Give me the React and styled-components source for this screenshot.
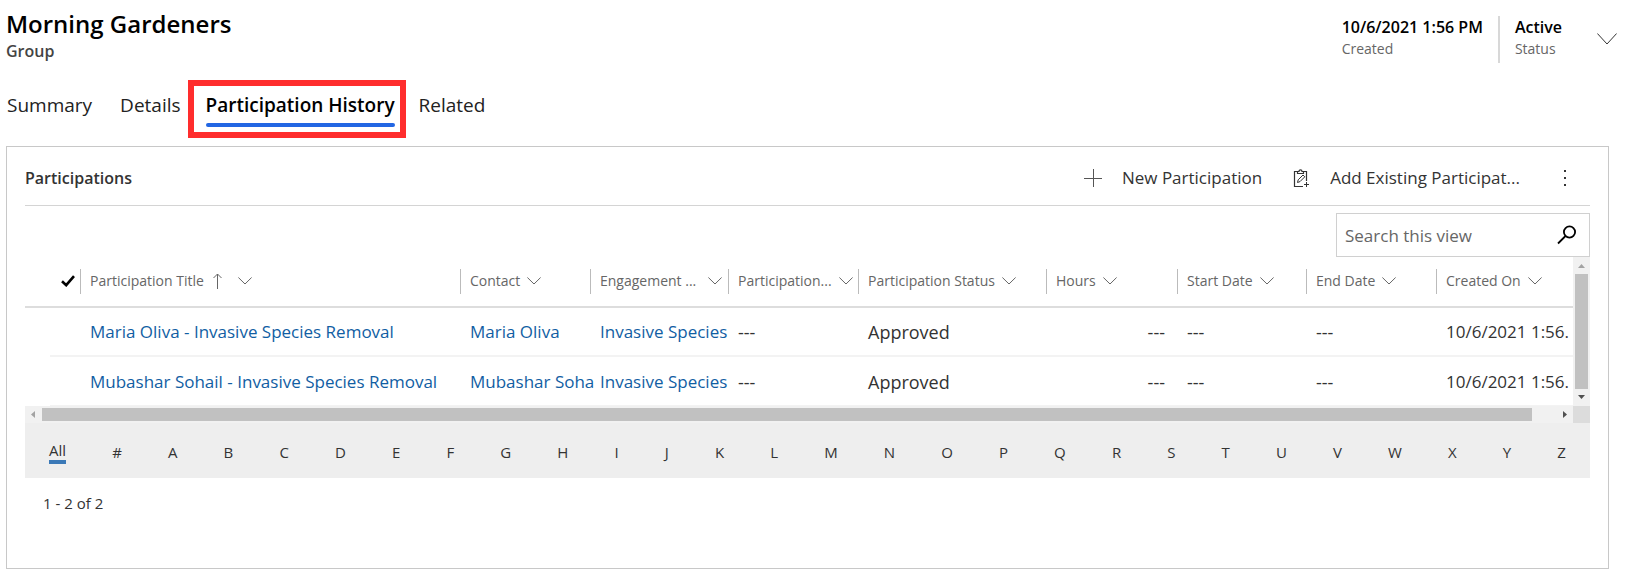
import React from "react";
import styled, { createGlobalStyle } from "styled-components";

const GlobalStyle = createGlobalStyle`
  *, *::before, *::after { box-sizing: border-box; }
  body {
    margin: 0;
    background: #fff;
    color: #333;
    font-family: "Open Sans", "Noto Sans", sans-serif;
    font-size: 16px;
  }
  button, input { font: inherit; color: inherit; }
  button { background: none; border: 0; padding: 0; cursor: pointer; }
  a { text-decoration: none; }
  svg { display: block; flex: none; }
`;

const Page = styled.main`
  padding: 8px 21px 12px 6px;
`;

const RecordHeader = styled.header`
  display: flex;
  justify-content: space-between;
  height: 72px;
`;

const Title = styled.h1`
  margin: 0;
  font-size: 24px;
  line-height: 32px;
  font-weight: 600;
  color: #000;
`;

const EntityName = styled.p`
  margin: 0;
  font-size: 16px;
  line-height: 22px;
  font-weight: 600;
  color: #444;
`;

const HeaderFields = styled.div`
  display: flex;
  align-items: flex-start;
  padding-top: 8px;
`;

const Field = styled.dl`
  margin: 0;
  height: 47px;
  padding: 0 15px;
  display: flex;
  flex-direction: column-reverse;
  justify-content: flex-end;
  & + & { border-left: 2px solid #d8d8d8; }
`;

const FieldValue = styled.dd`
  margin: 0;
  font-size: 16px;
  line-height: 22px;
  font-weight: 600;
  color: #000;
`;

const FieldLabel = styled.dt`
  font-size: 14px;
  line-height: 22px;
  color: #666;
`;

const ExpandButton = styled.button`
  margin: 17px -8px 0 20px;
`;

const Tabs = styled.nav`
  display: flex;
  align-items: flex-start;
  height: 66px;
`;

const Tab = styled.button`
  padding: 0 1px;
  margin-right: 26px;
  margin-top: 11px;
  font-size: 19px;
  line-height: 28px;
  color: #222;
`;

const ActiveTabFrame = styled.div`
  height: 58px;
  margin: 0 12px 0 -20px;
  padding: 5px 5px 0 12px;
  border: 6px solid #ff2d2d;
`;

const ActiveTab = styled(Tab)`
  display: block;
  margin: 0;
  padding: 0;
  font-weight: 600;
  color: #000;
  &::after {
    content: "";
    display: block;
    height: 4px;
    margin-top: 4px;
    border-radius: 2px;
    background: #2266e3;
  }
`;

const Panel = styled.section`
  border: 1px solid #c8c8c8;
  padding: 0 18px;
  min-height: 423px;
`;

const Toolbar = styled.div`
  display: flex;
  align-items: center;
  height: 59px;
  padding-top: 4px;
  border-bottom: 1px solid #d4d4d4;
`;

const PanelTitle = styled.h2`
  margin: 0;
  flex: 1;
  font-size: 16px;
  line-height: 24px;
  font-weight: 600;
  color: #333;
`;

const Command = styled.button`
  display: flex;
  align-items: center;
  gap: 20px;
  margin-right: 31px;
  font-size: 17px;
  line-height: 24px;
`;

const MoreButton = styled.button`
  margin: 0 23px 0 12px;
`;

const SearchRow = styled.div`
  display: flex;
  justify-content: flex-end;
  padding-top: 7px;
`;

const SearchBox = styled.form`
  display: flex;
  align-items: center;
  width: 254px;
  height: 44px;
  padding: 0 12px 0 8px;
  border: 1px solid #d0d0d0;
`;

const SearchInput = styled.input`
  flex: 1;
  min-width: 0;
  padding: 0;
  border: 0;
  outline: 0;
  font-size: 17px;
  &::placeholder { color: #666; opacity: 1; }
`;

const GridArea = styled.div`
  display: grid;
  grid-template-columns: minmax(0, 1fr) 17px;
  grid-template-rows: auto 17px;
`;

const Table = styled.table`
  width: 100%;
  table-layout: fixed;
  border-collapse: collapse;
`;

const Col = styled.col`
  width: ${(p) => (p.$w ? `${p.$w}px` : "auto")};
`;

const HeadCell = styled.th`
  height: 50px;
  padding: 1px 0 2px;
  border-bottom: 2px solid #ddd;
  font-weight: 400;
  text-align: left;
`;

const HeadContent = styled.div`
  display: flex;
  align-items: center;
  gap: 7px;
  height: 25px;
  padding: 0 6px 0 9px;
  border-left: 1px solid #bbb;
  font-size: 14px;
  line-height: 24px;
  white-space: nowrap;
  color: #666;
`;

const HeadLabel = styled.span`
  flex: ${(p) => (p.$fill ? "1" : "none")};
`;

const SelectAll = styled.button`
  display: block;
  margin-left: 36px;
`;

const Cell = styled.td`
  height: 50px;
  padding: 0 ${(p) => (p.$right ? "12px" : "0")} 2px 10px;
  white-space: nowrap;
  font-size: ${(p) => (p.$large ? "18px" : "17px")};
  line-height: 24px;
  text-align: ${(p) => (p.$right ? "right" : "left")};
  a { color: #115ea3; }
`;

const Row = styled.tr`
  background: linear-gradient(#f3f3f3, #f3f3f3) right bottom / calc(100% - 25px) 2px no-repeat;
  &:last-child {
    background-size: calc(100% - 25px) 1px;
  }
  &:last-child ${Cell} {
    height: 49px;
    padding-bottom: 0;
  }
`;

const VerticalScroll = styled.div`
  display: flex;
  flex-direction: column;
  align-items: center;
  background: #f1f1f1;
`;

const HorizontalScroll = styled.div`
  display: flex;
  align-items: center;
  background: #f1f1f1;
`;

const ScrollArrow = styled.button`
  display: flex;
  align-items: center;
  justify-content: center;
  width: 17px;
  height: 17px;
  flex: none;
  color: ${(p) => (p.$dim ? "#a3a3a3" : "#505050")};
`;

const VerticalThumb = styled.div`
  flex: 1;
  width: 13px;
  background: #c1c1c1;
`;

const HorizontalThumb = styled.div`
  flex: 1;
  height: 13px;
  margin-right: 24px;
  background: #c1c1c1;
`;

const ScrollCorner = styled.div`
  background: #dcdcdc;
`;

const JumpBar = styled.nav`
  display: flex;
  justify-content: space-between;
  align-items: center;
  height: 55px;
  padding: 2px 24px 0;
  background: #eee;
`;

const JumpButton = styled.button`
  font-size: 15px;
  line-height: 20px;
  color: #333;
  ${(p) => p.$active && "border-bottom: 4px solid #3b79b7;"}
`;

const Paging = styled.p`
  margin: 0;
  padding: 15px 18px;
  font-size: 15px;
  line-height: 20px;
`;

function Chevron({ width = 14, height = 8 }) {
  return (
    <svg width={width} height={height} viewBox={`0 0 ${width} ${height}`} fill="none" stroke="currentColor" aria-hidden="true">
      <path d={`M.4 .5L${width / 2} ${height - 1}L${width - 0.4} .5`} />
    </svg>
  );
}

const SortUp = () => (
  <svg width="20" height="16" viewBox="0 0 20 16" fill="none" stroke="currentColor" aria-hidden="true">
    <path d="M6.500 16V1M2.500 5L6.500 1L10.500 5" />
  </svg>
);

const Plus = () => (
  <svg width="18" height="18" viewBox="0 0 18 18" fill="none" stroke="#555" aria-hidden="true">
    <path d="M9.500 0V18M0 9.500H18" />
  </svg>
);

const ClipboardAdd = () => (
  <svg width="17" height="19" viewBox="0 0 17 19" fill="none" stroke="#333" aria-hidden="true">
    <path d="M10 17.500H1.500V2.500H4.500M10.500 2.500H13.500V12M4.500 4.500V2.500H6C6 .2 9 .2 9 2.500H10.500V4.500Z" strokeWidth="1.200" />
    <path d="M4.500 13.500L5.200 10.800L10 6L11.800 7.800L7 12.600Z" />
    <path d="M13.500 13V18M11 15.500H16" />
  </svg>
);

const More = () => (
  <svg width="4" height="18" viewBox="0 0 4 18" fill="#333" aria-hidden="true">
    <rect x="1" y="1" width="2" height="2" />
    <rect x="1" y="8" width="2" height="2" />
    <rect x="1" y="15" width="2" height="2" />
  </svg>
);

const Magnifier = () => (
  <svg width="20" height="20" viewBox="0 0 20 20" fill="none" stroke="#000" strokeWidth="1.800" aria-hidden="true">
    <circle cx="12.500" cy="7" r="5.600" />
    <path d="M8.500 11L1 18.500" />
  </svg>
);

const Check = () => (
  <svg width="14" height="12" viewBox="0 0 14 12" fill="none" stroke="#000" strokeWidth="2.600" aria-hidden="true">
    <path d="M1 6.200L5.200 10.200L13 1.200" />
  </svg>
);

const arrowPaths = {
  up: "M0 6L3.500 2L7 6Z",
  down: "M0 1L3.500 5L7 1Z",
  left: "M5 0L1 3.500L5 7Z",
  right: "M2 0L6 3.500L2 7Z",
};

const Arrow = ({ dir }) => (
  <svg width="7" height="7" viewBox="0 0 7 7" fill="currentColor" aria-hidden="true">
    <path d={arrowPaths[dir]} />
  </svg>
);

const columns = [
  { label: "Participation Title", sorted: true },
  { label: "Contact", width: 130 },
  { label: "Engagement ...", width: 138, fill: true },
  { label: "Participation...", width: 130, fill: true },
  { label: "Participation Status", width: 188 },
  { label: "Hours", width: 131 },
  { label: "Start Date", width: 129 },
  { label: "End Date", width: 130 },
  { label: "Created On", width: 137 },
];

const records = [
  { title: "Maria Oliva - Invasive Species Removal", contact: "Maria Oliva" },
  { title: "Mubashar Sohail - Invasive Species Removal", contact: "Mubashar Soha" },
];

const jumps = ["All", "#", ..."ABCDEFGHIJKLMNOPQRSTUVWXYZ"];

export default function App() {
  return (
    <>
      <GlobalStyle />
      <Page>
        <RecordHeader>
          <div>
            <Title>Morning Gardeners</Title>
            <EntityName>Group</EntityName>
          </div>
          <HeaderFields>
            <Field>
              <FieldLabel>Created</FieldLabel>
              <FieldValue>10/6/2021 1:56 PM</FieldValue>
            </Field>
            <Field>
              <FieldLabel>Status</FieldLabel>
              <FieldValue>Active</FieldValue>
            </Field>
            <ExpandButton aria-label="Expand header">
              <Chevron width={20} height={12} />
            </ExpandButton>
          </HeaderFields>
        </RecordHeader>

        <Tabs>
          <Tab>Summary</Tab>
          <Tab>Details</Tab>
          <ActiveTabFrame>
            <ActiveTab>Participation History</ActiveTab>
          </ActiveTabFrame>
          <Tab>Related</Tab>
        </Tabs>

        <Panel>
          <Toolbar>
            <PanelTitle>Participations</PanelTitle>
            <Command><Plus />New Participation</Command>
            <Command><ClipboardAdd />Add Existing Participat...</Command>
            <MoreButton aria-label="More commands"><More /></MoreButton>
          </Toolbar>

          <SearchRow>
            <SearchBox role="search" onSubmit={(e) => e.preventDefault()}>
              <SearchInput type="text" placeholder="Search this view" aria-label="Search this view" />
              <button type="submit" aria-label="Search"><Magnifier /></button>
            </SearchBox>
          </SearchRow>

          <GridArea>
            <Table>
              <colgroup>
                <Col $w={55} />
                {columns.map((c) => <Col key={c.label} $w={c.width} />)}
              </colgroup>
              <thead>
                <tr>
                  <HeadCell><SelectAll aria-label="Select all"><Check /></SelectAll></HeadCell>
                  {columns.map((c) => (
                    <HeadCell key={c.label}>
                      <HeadContent>
                        <HeadLabel $fill={c.fill}>{c.label}</HeadLabel>
                        {c.sorted && <SortUp />}
                        <Chevron />
                      </HeadContent>
                    </HeadCell>
                  ))}
                </tr>
              </thead>
              <tbody>
                {records.map((r) => (
                  <Row key={r.title}>
                    <Cell />
                    <Cell><a href="#record">{r.title}</a></Cell>
                    <Cell><a href="#contact">{r.contact}</a></Cell>
                    <Cell><a href="#engagement">Invasive Species</a></Cell>
                    <Cell $large>---</Cell>
                    <Cell $large>Approved</Cell>
                    <Cell $large $right>---</Cell>
                    <Cell $large>---</Cell>
                    <Cell $large>---</Cell>
                    <Cell>10/6/2021 1:56.</Cell>
                  </Row>
                ))}
              </tbody>
            </Table>
            <VerticalScroll>
              <ScrollArrow $dim aria-label="Scroll up"><Arrow dir="up" /></ScrollArrow>
              <VerticalThumb />
              <ScrollArrow aria-label="Scroll down"><Arrow dir="down" /></ScrollArrow>
            </VerticalScroll>
            <HorizontalScroll>
              <ScrollArrow $dim aria-label="Scroll left"><Arrow dir="left" /></ScrollArrow>
              <HorizontalThumb />
              <ScrollArrow aria-label="Scroll right"><Arrow dir="right" /></ScrollArrow>
            </HorizontalScroll>
            <ScrollCorner />
          </GridArea>

          <JumpBar aria-label="Jump to letter">
            {jumps.map((j) => <JumpButton key={j} $active={j === "All"}>{j}</JumpButton>)}
          </JumpBar>
          <Paging>1 - 2 of 2</Paging>
        </Panel>
      </Page>
    </>
  );
}
